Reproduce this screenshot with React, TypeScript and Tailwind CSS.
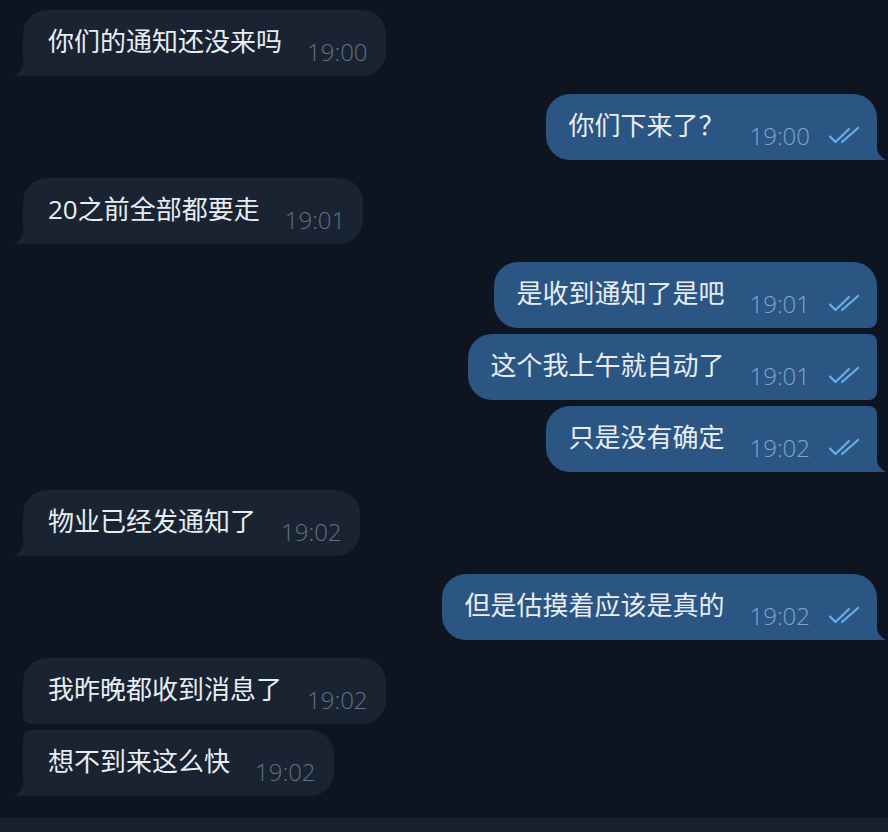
type Msg = { text: string; time: string }
type Group = { out: boolean; msgs: Msg[] }

const groups: Group[] = [
  { out: false, msgs: [{ text: '你们的通知还没来吗', time: '19:00' }] },
  { out: true, msgs: [{ text: '你们下来了？', time: '19:00' }] },
  { out: false, msgs: [{ text: '20之前全部都要走', time: '19:01' }] },
  {
    out: true,
    msgs: [
      { text: '是收到通知了是吧', time: '19:01' },
      { text: '这个我上午就自动了', time: '19:01' },
      { text: '只是没有确定', time: '19:02' },
    ],
  },
  { out: false, msgs: [{ text: '物业已经发通知了', time: '19:02' }] },
  { out: true, msgs: [{ text: '但是估摸着应该是真的', time: '19:02' }] },
  {
    out: false,
    msgs: [
      { text: '我昨晚都收到消息了', time: '19:02' },
      { text: '想不到来这么快', time: '19:02' },
    ],
  },
]

function DoubleCheck() {
  return (
    <svg width="34" height="18" viewBox="0 0 34 18" fill="none" className="ml-[18px] mt-[32px] shrink-0">
      <path d="M2 10.5 L7.5 16 L21 3" stroke="#6aaee8" strokeWidth="2.2" strokeLinecap="round" strokeLinejoin="round" />
      <path d="M14 16 L30 2" stroke="#6aaee8" strokeWidth="2.2" strokeLinecap="round" />
    </svg>
  )
}

function Tail({ out, color }: { out: boolean; color: string }) {
  return out ? (
    <svg width="10" height="18" viewBox="0 0 10 18" className="absolute bottom-0 right-[-9px]">
      <path d="M0 0 C0 10 4 15 10 18 L0 18 Z" fill={color} />
    </svg>
  ) : (
    <svg width="10" height="18" viewBox="0 0 10 18" className="absolute bottom-0 left-[-9px]">
      <path d="M10 0 C10 10 6 15 0 18 L10 18 Z" fill={color} />
    </svg>
  )
}

function Bubble({ msg, out, first, last }: { msg: Msg; out: boolean; first: boolean; last: boolean }) {
  const color = out ? '#2b5683' : '#192332'
  let corners = ''
  if (out) {
    corners = 'rounded-l-[24px] '
    corners += first ? 'rounded-tr-[24px] ' : 'rounded-tr-[8px] '
    corners += last ? 'rounded-br-none' : 'rounded-br-[8px]'
  } else {
    corners = 'rounded-r-[24px] '
    corners += first ? 'rounded-tl-[24px] ' : 'rounded-tl-[8px] '
    corners += last ? 'rounded-bl-none' : 'rounded-bl-[8px]'
  }
  return (
    <div className={`flex ${out ? 'justify-end pr-[11px]' : 'justify-start pl-[23px]'}`}>
      <div
        className={`relative flex h-[66px] items-start ${corners} ${out ? 'bg-[#2b5683] pl-[22px] pr-[15px]' : 'bg-[#192332] pl-[25px] pr-[18px]'}`}
      >
        <span className="pt-[16px] text-[26px] leading-[30px] text-[#e8edf2] whitespace-nowrap">{msg.text}</span>
        <span
          className={`ml-[25px] pt-[28px] text-[24px] leading-[28px] font-light whitespace-nowrap ${out ? 'text-[#7ea6cf]' : 'text-[#607182]'}`}
        >
          {msg.time}
        </span>
        {out && <DoubleCheck />}
        {last && <Tail out={out} color={color} />}
      </div>
    </div>
  )
}

export default function App() {
  return (
    <div
      className="flex h-[832px] w-[888px] flex-col overflow-hidden bg-[#0e1420]"
      style={{ fontFamily: "'Open Sans', 'Noto Sans CJK SC', sans-serif" }}
    >
      <div className="flex flex-1 flex-col gap-[18px] pt-[10px]">
        {groups.map((g, gi) => (
          <div key={gi} className="flex flex-col gap-[6px]">
            {g.msgs.map((m, mi) => (
              <Bubble key={mi} msg={m} out={g.out} first={mi === 0} last={mi === g.msgs.length - 1} />
            ))}
          </div>
        ))}
      </div>
      <div className="h-[14px] bg-[#17202b]" />
    </div>
  )
}
